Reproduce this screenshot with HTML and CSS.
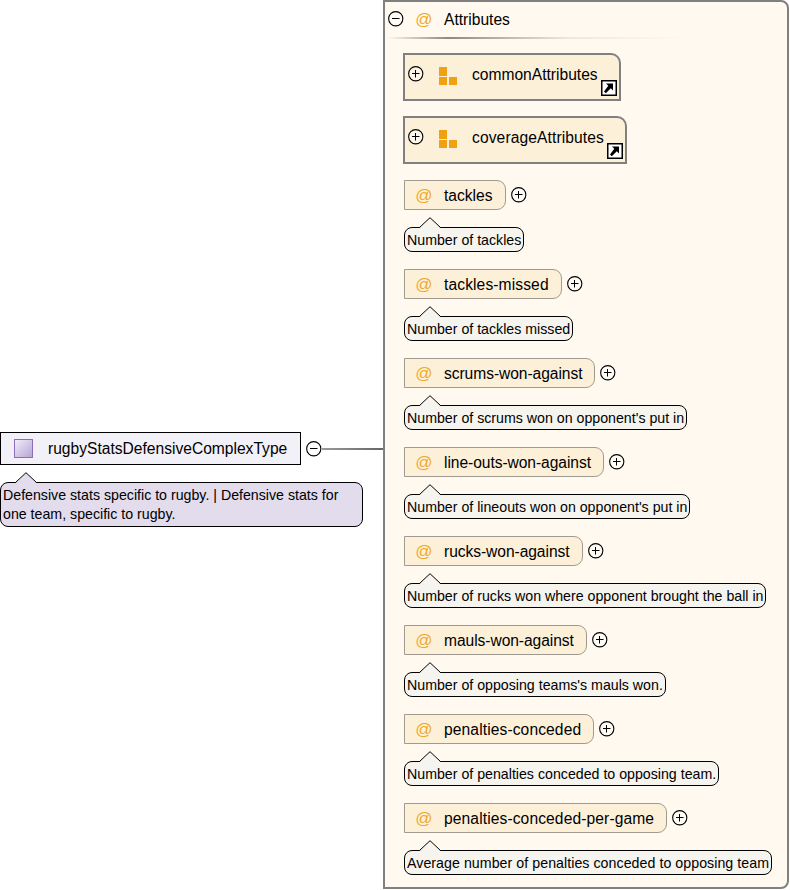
FILE: index.html
```html
<!DOCTYPE html>
<html lang="en">
<head>
<meta charset="utf-8">
<title>rugbyStatsDefensiveComplexType</title>
<link rel="stylesheet" href="styles.css">
</head>
<body>
<svg class="defs" width="0" height="0" aria-hidden="true">
  <symbol id="minus" viewBox="0 0 16 16"><circle cx="7.750" cy="7.750" r="7.100" fill="#fff" fill-opacity=".4" stroke="#000" stroke-width="1.100"/><path d="M4 7.500h7.500" stroke="#000"/></symbol>
  <symbol id="plus" viewBox="0 0 16 16"><circle cx="7.750" cy="7.750" r="7.100" fill="#fff" fill-opacity=".4" stroke="#000" stroke-width="1.100"/><path d="M4 7.500h7.500M7.500 4v7.500" stroke="#000"/></symbol>
  <symbol id="blocks" viewBox="0 0 18 18"><path d="M0 0h8v9H0zM0 10h8v8H0zM10 10h8v8h-8z" fill="#f0a010"/></symbol>
  <symbol id="link" viewBox="0 0 16 16"><rect x=".75" y=".75" width="14.500" height="14.500" fill="#fff" stroke="#000" stroke-width="1.500"/><path d="M3 11.500l1.800 1.800 5-5 2.200 2.200V3.500H5l2.300 2.300z" fill="#000"/></symbol>
  <symbol id="tip" viewBox="0 0 22 11"><path d="M0.500 11L11 0.700 21.500 11z" stroke="none"/><path d="M0.500 10.500L11 0.700 21.500 10.500" fill="none" stroke="#000"/></symbol>
</svg>
<main class="diagram">
  <section class="root">
    <div class="root-row">
      <div class="root-node"><span class="swatch"></span><span>rugbyStatsDefensiveComplexType</span></div>
      <svg class="toggle root-toggle"><use href="#minus"/></svg>
      <span class="connector"></span>
    </div>
    <svg class="tip root-tip"><use href="#tip"/></svg>
    <p class="note root-note">Defensive stats specific to rugby. | Defensive stats for one team, specific to rugby.</p>
  </section>
  <section class="panel">
    <header class="panel-head">
      <svg class="toggle"><use href="#minus"/></svg>
      <span class="at">@</span>
      <span class="panel-title">Attributes</span>
    </header>
    <div class="rule"></div>
    <div class="group"><svg class="toggle"><use href="#plus"/></svg><svg class="blocks"><use href="#blocks"/></svg><span>commonAttributes</span><svg class="link"><use href="#link"/></svg></div>
    <div class="group"><svg class="toggle"><use href="#plus"/></svg><svg class="blocks"><use href="#blocks"/></svg><span class="wide">coverageAttributes</span><svg class="link"><use href="#link"/></svg></div>

    <div class="attr">
      <div class="attr-row"><div class="attr-box"><span class="at">@</span><span>tackles</span></div><svg class="toggle"><use href="#plus"/></svg></div>
      <svg class="tip"><use href="#tip"/></svg>
      <p class="note">Number of tackles</p>
    </div>
    <div class="attr">
      <div class="attr-row"><div class="attr-box"><span class="at">@</span><span class="wide">tackles-missed</span></div><svg class="toggle"><use href="#plus"/></svg></div>
      <svg class="tip"><use href="#tip"/></svg>
      <p class="note">Number of tackles missed</p>
    </div>
    <div class="attr">
      <div class="attr-row"><div class="attr-box"><span class="at">@</span><span class="tight">scrums-won-against</span></div><svg class="toggle"><use href="#plus"/></svg></div>
      <svg class="tip"><use href="#tip"/></svg>
      <p class="note">Number of scrums won on opponent's put in</p>
    </div>
    <div class="attr">
      <div class="attr-row"><div class="attr-box"><span class="at">@</span><span class="tight">line-outs-won-against</span></div><svg class="toggle"><use href="#plus"/></svg></div>
      <svg class="tip"><use href="#tip"/></svg>
      <p class="note">Number of lineouts won on opponent's put in</p>
    </div>
    <div class="attr">
      <div class="attr-row"><div class="attr-box"><span class="at">@</span><span class="tight">rucks-won-against</span></div><svg class="toggle"><use href="#plus"/></svg></div>
      <svg class="tip"><use href="#tip"/></svg>
      <p class="note">Number of rucks won where opponent brought the ball in</p>
    </div>
    <div class="attr">
      <div class="attr-row"><div class="attr-box"><span class="at">@</span><span class="tight">mauls-won-against</span></div><svg class="toggle"><use href="#plus"/></svg></div>
      <svg class="tip"><use href="#tip"/></svg>
      <p class="note">Number of opposing teams's mauls won.</p>
    </div>
    <div class="attr">
      <div class="attr-row"><div class="attr-box"><span class="at">@</span><span class="wide">penalties-conceded</span></div><svg class="toggle"><use href="#plus"/></svg></div>
      <svg class="tip"><use href="#tip"/></svg>
      <p class="note">Number of penalties conceded to opposing team.</p>
    </div>
    <div class="attr">
      <div class="attr-row"><div class="attr-box"><span class="at">@</span><span class="wide">penalties-conceded-per-game</span></div><svg class="toggle"><use href="#plus"/></svg></div>
      <svg class="tip"><use href="#tip"/></svg>
      <p class="note note-wide">Average number of penalties conceded to opposing team</p>
    </div>
  </section>
</main>
</body>
</html>
```
FILE: styles.css
```css
* { box-sizing: border-box; }
html, body { margin: 0; background: #fff; }
body {
  width: 790px;
  height: 890px;
  overflow: hidden;
  font-family: "Liberation Sans", Arial, sans-serif;
  font-size: 15.6px;
  color: #000;
}
.defs { position: absolute; }
.diagram { display: flex; align-items: flex-start; }
.wide { letter-spacing: .11px; }
.tight { letter-spacing: -.06px; }

.root { width: 383px; flex: none; padding-top: 432px; }
.root-row { display: flex; align-items: center; }
.root-node {
  width: 301px;
  height: 33px;
  display: flex;
  align-items: center;
  gap: 15px;
  padding-left: 13px;
  background: #f3f1f8;
  border: 1px solid #000;
}
.swatch {
  width: 19px;
  height: 19px;
  flex: none;
  border: 1px solid #8a6fb8;
  background: linear-gradient(135deg, #f1edf8, #b8a4d8);
}
.toggle { width: 16px; height: 16px; flex: none; display: block; }
.root-toggle { margin-left: 5px; }
.connector {
  flex: 1;
  height: 2px;
  background: linear-gradient(90deg, #9a9a9a, #666);
}
.tip {
  display: block;
  width: 22px;
  height: 11px;
  margin: 7px 0 -1px 15px;
  position: relative;
  z-index: 1;
  fill: #f6f4ee;
}
.root-tip { fill: #e3dcec; }

.note {
  margin: 0;
  width: fit-content;
  height: 25px;
  padding: 2px 2px 1px;
  font-size: 14.2px;
  line-height: 20px;
  white-space: nowrap;
  background: #f6f4ee;
  border: 1px solid #000;
  border-radius: 8px;
}
.note-wide { letter-spacing: .05px; }
.root-note {
  width: 363px;
  height: 45px;
  padding-top: 3px;
  line-height: 19px;
  white-space: normal;
  background: #e3dcec;
}

.panel {
  width: 406px;
  height: 889px;
  flex: none;
  padding: 0 0 0 19px;
  background: #fff9f0;
  border: 2px solid #808080;
  border-radius: 0 8px 8px 0;
}
.panel-head {
  display: flex;
  align-items: center;
  height: 34px;
  margin-left: -16px;
  padding-top: 1px;
}
.panel-head .toggle { margin-top: -2px; }
.at { color: #eda92c; width: 20px; flex: none; text-align: center; font-size: 17px; }
.panel-head .at { margin-left: 10px; }
.panel-title { margin-left: 10px; }
.rule {
  height: 2px;
  margin: 1px 0 14px -17px;
  width: 303px;
  background: linear-gradient(90deg, #fff9f0 0%, #8f8a80 20%, #efe9dc 60%, #fff9f0 100%);
}
.group {
  position: relative;
  display: flex;
  align-items: flex-start;
  width: fit-content;
  height: 48px;
  margin: 0 0 15px -1px;
  padding: 11px 21px 0 3px;
  background: #fdf0d9;
  border: 2px solid #808080;
  border-radius: 0 10px 0 0;
}
.group + .attr { margin-top: 16px; }
.blocks { width: 18px; height: 18px; margin: 1px 0 0 15px; flex: none; }
.group span { margin-left: 15px; line-height: 18px; }
.link { position: absolute; right: 2px; bottom: 3px; width: 16px; height: 16px; }

.attr { height: 89px; }
.attr-row { display: flex; align-items: center; gap: 5px; }
.attr-row .toggle { margin-top: -1px; }
.attr-box {
  display: flex;
  align-items: center;
  height: 30px;
  padding: 2px 12px 0 9px;
  background: #fdf0d9;
  border: 1px solid #a09a90;
  border-radius: 0 9px 9px 0;
}
.attr-box span:last-child { margin-left: 10px; }
```
